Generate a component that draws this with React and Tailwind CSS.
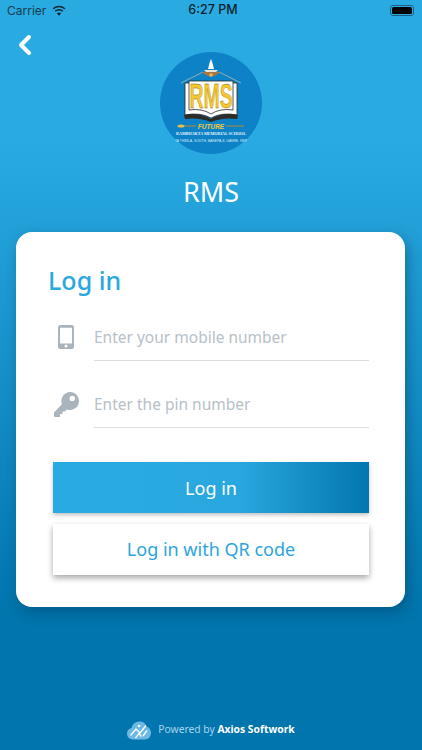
import React from 'react';
import { ChevronLeft } from 'lucide-react';

const Logo = () => (
  <svg viewBox="0 0 102 102" className="w-[102px] h-[102px] block">
    <circle cx="51" cy="51" r="51" fill="#0d82c6" />
    {/* roof lines */}
    <path d="M21 31 L43 20 M81 31 L59 20" stroke="#c9c6a8" strokeWidth="0.7" fill="none" />
    {/* shrine */}
    <path d="M51 7 L52.500 11 L54 17 L48 17 L49.500 11 Z" fill="#fff" />
    <path d="M44 18 H58 L56 20 H46 Z" fill="#f1e5d2" />
    <path d="M42 20 Q51 29 60 20 Z" fill="#a87544" />
    <circle cx="51" cy="23" r="1.800" fill="#f0b35a" />
    {/* open book */}
    <path d="M25 31 L25 63 Q40 60 51 66 Q62 60 77 63 L77 31 Z" fill="#fff" stroke="#2a2a2a" strokeWidth="0.8" />
    <path d="M29 29 H73 V58 Q60 56 51 62 Q42 56 29 58 Z" fill="#fff" stroke="#2a2a2a" strokeWidth="0.8" />
    <path d="M24 63 Q38 60 51 67 Q64 60 78 63 L77 67 Q63 65 51 70 Q39 65 25 67 Z" fill="#2e2a25" />
    <text transform="translate(51 56) scale(0.72 1.3)" textAnchor="middle" fontSize="27" fontWeight="700" fill="#f5c731" stroke="#7a6420" strokeWidth="0.3" fontFamily="'Liberation Sans',sans-serif">RMS</text>
    {/* future ribbon */}
    <path d="M18 74 H36 M66 74 H84" stroke="#b28a2c" strokeWidth="1.200" />
    <ellipse cx="21" cy="74" rx="3.500" ry="1.500" fill="#e3c050" />
    <text x="51" y="76.500" textAnchor="middle" fontSize="6.500" fontWeight="700" fontStyle="italic" fill="#f3cb3b" fontFamily="'Liberation Sans',sans-serif">FUTURE</text>
    <text x="51" y="83" textAnchor="middle" fontSize="5" fontWeight="700" textLength="70" lengthAdjust="spacingAndGlyphs" fill="#e6f2fa" fontFamily="'Liberation Serif',serif">RAMBHAKTA MEMORIAL SCHOOL</text>
    <text x="51" y="89.500" textAnchor="middle" fontSize="4.200" textLength="72" lengthAdjust="spacingAndGlyphs" fill="#dcecf7" fontFamily="'Liberation Sans',sans-serif">TA THINLA, SOUTH, BANEPA-8, GAVRE, NEP</text>
  </svg>
);

const PhoneIcon = () => (
  <svg viewBox="0 0 16 24" className="w-4 h-6 block">
    <path fillRule="evenodd" d="M2.500 0h11A2.500 2.500 0 0 1 16 2.500v19a2.500 2.500 0 0 1-2.500 2.500h-11A2.500 2.500 0 0 1 0 21.500v-19A2.500 2.500 0 0 1 2.500 0ZM2 2.800V18.500h12V2.800ZM8 19.600a1.500 1.500 0 1 0 0 3 1.500 1.500 0 0 0 0-3Z" fill="#a9b4bd" />
  </svg>
);

const KeyIcon = () => (
  <svg viewBox="0 0 25 25" className="w-[25px] h-[25px] block">
    <path fillRule="evenodd" d="M16 0a9 9 0 1 1-3.300 17.400L10.800 19.500H8.500V22H6v3H0.800Q0 25 0 24.200V20.500L8 12.300A9 9 0 0 1 16 0Zm2.300 3.700a2.700 2.700 0 1 0 0 5.400 2.700 2.700 0 0 0 0-5.400Z" fill="#a9b4bd" />
  </svg>
);

const CloudLogo = () => (
  <svg viewBox="0 0 24 20" className="w-6 h-5 block">
    <path d="M6 19.500Q0 19 0 13.500 0 9 4.500 8 6 1.500 12.500 1.500 18 1.500 19.500 6.500 24 8 24 13 23.500 19 18 19.500Z" fill="#6cb8e4" />
    <path d="M3.500 15.500 L9 9 L13 13 L19 5.500 M8.500 18 L12 13.500 L14.500 16.500 M16 16 L20 10.500" stroke="#fff" strokeWidth="1.300" fill="none" />
    <circle cx="12" cy="6" r="1.300" fill="#fff" />
  </svg>
);

const Field = ({ icon, label }) => (
  <div className="flex items-start">
    <div className="w-[34px] h-[48px] flex items-center justify-center">{icon}</div>
    <div className="flex-1 h-[48px] ml-[11px] pt-[2px] border-b border-[#d9dee1] flex items-center text-[15.500px] text-[#b6c1c8]">
      {label}
    </div>
  </div>
);

export default function App() {
  return (
    <div className="h-[750px] w-[422px] overflow-hidden flex flex-col bg-[linear-gradient(180deg,#29abe2_0%,#29abe2_18%,#0175ad_82%,#0175ad_100%)] font-['Noto_Sans',sans-serif]">
      {/* Status bar */}
      <div className="h-[21px] shrink-0 grid grid-cols-3 items-center px-[7px] text-[12.500px] text-[#10222c] font-['Inter','Liberation_Sans',sans-serif]">
        <div className="flex items-center gap-[6px]">
          <span className="text-[12px] text-[#1a3a4c]">Carrier</span>
          <svg viewBox="0 0 16 12" className="w-[14px] h-[11px]">
            <path d="M8 12 L5.600 9.200 Q8 7.400 10.400 9.200 Z" fill="#10222c" />
            <path d="M3.700 6.800 Q8 3.600 12.300 6.800 M1.300 4 Q8 -1.200 14.700 4" stroke="#10222c" strokeWidth="1.800" fill="none" />
          </svg>
        </div>
        <div className="text-center font-medium pl-[4px]">6:27 PM</div>
        <div className="flex justify-end pr-[1px]">
          <div className="w-[24px] h-[11px] rounded-[3px] border border-[#1c5f85] p-[1px]">
            <div className="w-full h-full rounded-[1.500px] bg-black" />
          </div>
        </div>
      </div>

      {/* Header */}
      <div className="relative flex flex-col items-center pt-[31px]">
        <button className="absolute left-[9px] top-[8px] text-white">
          <ChevronLeft className="w-[32px] h-[32px]" strokeWidth={3} />
        </button>
        <Logo />
        <div className="mt-[22px] text-[27px] leading-[32px] text-white">RMS</div>
      </div>

      {/* Card */}
      <div className="mt-[24px] ml-[16px] w-[389px] h-[375px] rounded-[16px] bg-white shadow-[3px_5px_14px_rgba(0,50,85,0.4)] pt-[31px] pl-[33px] pr-[36px]">
        <div className="ml-[-1px] text-[25px] leading-[34px] font-medium text-[#29a8e0]">Log in</div>
        <div className="mt-[16px] flex flex-col gap-[19px]">
          <Field icon={<PhoneIcon />} label="Enter your mobile number" />
          <Field icon={<KeyIcon />} label="Enter the pin number" />
        </div>
        <div className="mt-[34px] ml-[4px] flex flex-col gap-[11px]">
          <button className="h-[51px] pt-[2px] text-[18px] text-white bg-[linear-gradient(90deg,#29abe2_0%,#29a8df_58%,#0376af_100%)] shadow-[0_2px_4px_rgba(0,0,0,0.25)]">
            Log in
          </button>
          <button className="h-[51px] text-[18px] text-[#2ba6dd] bg-white shadow-[0_3px_6px_rgba(0,0,0,0.35)]">
            Log in with QR code
          </button>
        </div>
      </div>

      {/* Footer */}
      <div className="mt-auto mb-[10px] flex items-center justify-center gap-[7px] text-[10.300px] text-[#a6d5ee]">
        <CloudLogo />
        <span>
          Powered by <span className="font-bold text-white">Axios Softwork</span>
        </span>
      </div>
    </div>
  );
}
